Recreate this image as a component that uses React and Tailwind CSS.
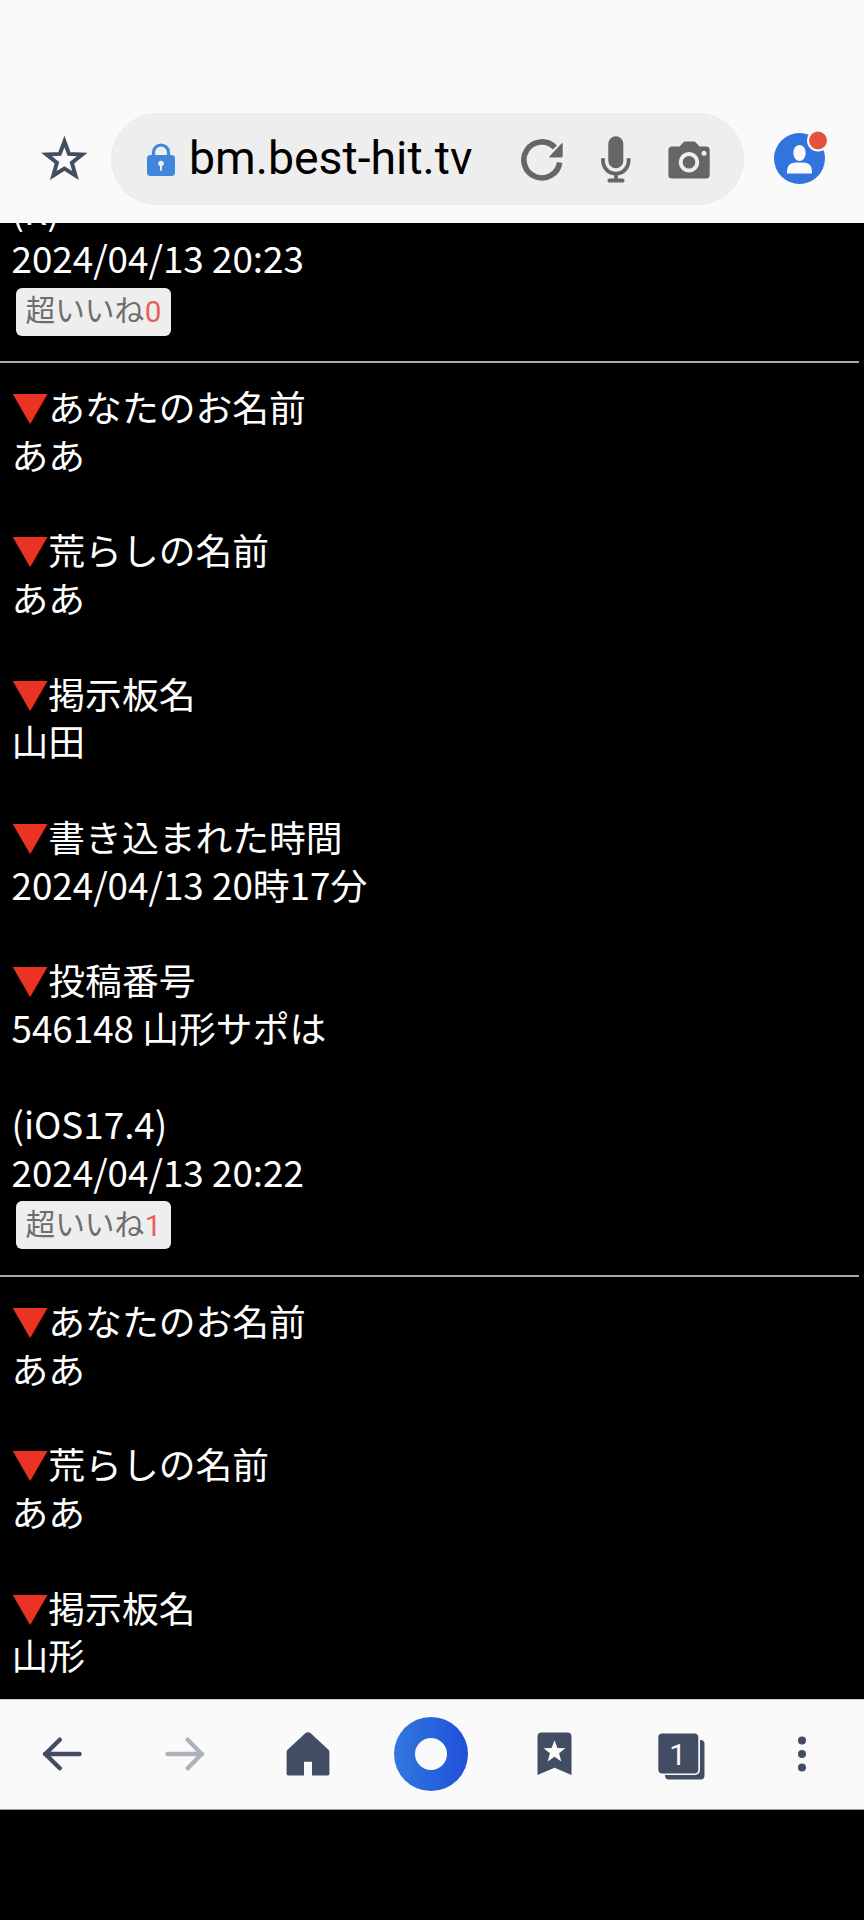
import React from 'react';

const posts = [
  {
    fields: [],
    agent: '(R)',
    date: '2024/04/13 20:23',
    likes: 0,
  },
  {
    fields: [
      { label: 'あなたのお名前', value: 'ああ' },
      { label: '荒らしの名前', value: 'ああ' },
      { label: '掲示板名', value: '山田' },
      { label: '書き込まれた時間', value: '2024/04/13 20時17分' },
      { label: '投稿番号', value: '546148 山形サポは' },
    ],
    agent: '(iOS17.4)',
    date: '2024/04/13 20:22',
    likes: 1,
  },
  {
    fields: [
      { label: 'あなたのお名前', value: 'ああ' },
      { label: '荒らしの名前', value: 'ああ' },
      { label: '掲示板名', value: '山形' },
    ],
  },
];

const Post = ({ post }) => (
  <article>
    <div className="pl-[11.5px]">
      {post.fields.map((field) => (
        <div key={field.label} className="mb-[47.8px]">
          <p>
            <span className="text-[#ea3323]">▼</span>
            {field.label}
          </p>
          <p>{field.value}</p>
        </div>
      ))}
      {post.date && (
        <>
          <p>{post.agent}</p>
          <p>{post.date}</p>
          <button className="mt-[6px] ml-[4.5px] flex h-12 w-[155px] items-center rounded-md bg-[#eee] pl-[9.5px] text-[29.7px] leading-none text-[#6e6e6e]">
            <span className="-mt-[5px]">超いいね</span>
            <span className="ml-[0.5px] font-[Roboto] text-[#e8605c]">{post.likes}</span>
          </button>
        </>
      )}
    </div>
    {post.date && <hr className="mt-[25.3px] mr-[5px] mb-[20px] h-[2px] border-0 bg-[#aaa]" />}
  </article>
);

const AddressBar = () => (
  <header className="flex h-[223px] shrink-0 items-start bg-[#fafafa] pt-[113px]">
    {/* Favori */}
    <svg width="46" height="46" viewBox="0 0 46 46" className="mt-[22px] ml-[41px] shrink-0">
      <path
        d="M23.4 6.5l4.6 12.4 13.2.6-10.3 8.2 3.6 12.8-11.100-7-11.100 7 3.600-12.800-10.300-8.200 13.200-.6z"
        fill="none"
        stroke="#424d63"
        strokeWidth="4"
      />
    </svg>
    <div className="ml-6 flex h-[92px] w-[633px] shrink-0 items-center rounded-full border border-[#ebebeb] bg-[#eee]">
      <svg width="28" height="33" viewBox="0 0 28 33" className="ml-[35px] shrink-0">
        <path d="M6.5 14V9.5a7.5 7.5 0 0 1 15 0V14" fill="none" stroke="#4285dd" strokeWidth="3.2" />
        <rect y="12" width="28" height="21" rx="3.5" fill="#4285dd" />
        <circle cx="14" cy="20.5" r="2.8" fill="#eee" />
        <path d="M14 21v6" stroke="#eee" strokeWidth="2" strokeLinecap="round" />
      </svg>
      <span className="-mt-[2px] ml-[14px] w-[332px] font-[Roboto] text-[46.4px] leading-none whitespace-nowrap text-black">
        bm.best-hit.tv
      </span>
      <svg width="42" height="42" viewBox="0 0 42 42" className="mt-px shrink-0">
        <path d="M38.700 23.500A18 18 0 1 1 33.900 8.500" fill="none" stroke="#666" strokeWidth="5.6" />
        <path d="M40.500 4.500q1.200-1.100 1.200.6v11.700q0 1.700-1.700 1.700H29.500q-2 0-.6-1.500z" fill="#666" />
      </svg>
      <svg width="30" height="47" viewBox="0 0 30 47" className="mt-px ml-[38px] shrink-0">
        <rect x="7.3" y="0.3" width="15" height="32" rx="7.5" fill="#666" />
        <path d="M2 22.3v2.5a12.8 12.8 0 0 0 25.6 0v-2.5M15 37v7" fill="none" stroke="#666" strokeWidth="3.8" />
        <rect x="6.5" y="42.6" width="17" height="4" rx="1.8" fill="#666" />
      </svg>
      <svg width="42" height="38" viewBox="0 0 42 38" className="mt-px ml-[37px] shrink-0">
        <path
          d="M4 5.5h7.5L15.5 1.2Q16 .6 17 .6h9q1 0 1.6.6l3.9 4.3H38q3.7 0 3.7 3.7V34q0 3.6-3.7 3.6H4Q.4 37.6.4 34V9.2Q.4 5.5 4 5.5z"
          fill="#666"
        />
        <circle cx="21" cy="21.3" r="8.3" fill="#666" stroke="#eee" strokeWidth="4" />
        <circle cx="36" cy="12.3" r="2.5" fill="#eee" />
      </svg>
    </div>
    <svg width="56" height="56" viewBox="0 0 56 56" className="mt-[16px] ml-[29px] shrink-0">
      <circle cx="26.5" cy="29.5" r="25.5" fill="#3174dd" />
      <ellipse cx="26.5" cy="24" rx="6.2" ry="8" fill="#fafafa" />
      <path d="M14 44.5V42q0-8.5 9-8.5h7q9 0 9 8.5v2.5z" fill="#fafafa" />
      <circle cx="45" cy="11.5" r="10" fill="#e2533f" stroke="#fafafa" strokeWidth="2" />
    </svg>
  </header>
);

const NavBar = () => (
  <nav className="grid h-[111px] shrink-0 grid-cols-7 items-center justify-items-center border-t border-b border-t-[#ccc] border-b-[#999] bg-[#fafafa] pr-[2px] pb-px">
    <svg width="40" height="34" viewBox="0 0 40 34">
      <path
        d="M37.5 17H3M17.8 2.7L3.3 17l14.5 14.3"
        fill="none"
        stroke="#424d63"
        strokeWidth="4.4"
        strokeLinecap="round"
        strokeLinejoin="round"
      />
    </svg>
    <svg width="40" height="34" viewBox="0 0 40 34">
      <path
        d="M2.5 17H37M22.7 2.7L36.7 17l-14 14.3"
        fill="none"
        stroke="#adb2bc"
        strokeWidth="4.4"
        strokeLinecap="round"
        strokeLinejoin="round"
      />
    </svg>
    <svg width="44" height="44" viewBox="0 0 44 44">
      <path
        d="M.6 20q0-1.2 1-2.2L19 1.6q3-2.6 6 0l17.4 16.2q1 1 1 2.2v21.8q0 1.6-1.6 1.6H26V29.8h-8v13.6H2.2Q.6 43.4.6 41.8z"
        fill="#424d63"
      />
    </svg>
    <div className="flex h-[74px] w-[74px] items-center justify-center rounded-full bg-linear-to-r from-[#3277dd] to-[#224fda]">
      <div className="h-8 w-8 rounded-full bg-[#fafafa]" />
    </div>
    <svg width="35" height="44" viewBox="0 0 35 44">
      <path d="M.5 43V4.5Q.5.6 4.5.6h26q4 0 4 3.9V43l-17-7.2z" fill="#424d63" />
      <path d="M17.5 8.2l2.9 7.8 8 .3-6.3 5 2.2 8.1-6.8-4.6-6.8 4.6 2.2-8.1-6.3-5 8-.3z" fill="#fafafa" />
    </svg>
    <div className="mt-[5px] ml-[8px] grid">
      <svg width="47" height="47" viewBox="0 0 47 47" className="col-start-1 row-start-1">
        <rect x="7" y="7" width="39.5" height="39.5" rx="4" fill="#424d63" />
        <rect x="-2" y="-2" width="44" height="44" rx="5" fill="#fafafa" />
        <rect x="0.3" y="0.5" width="40" height="40" rx="4" fill="#424d63" />
      </svg>
      <span className="col-start-1 row-start-1 w-10 pt-[6px] text-center font-[Roboto] text-[30px] leading-8 text-[#fafafa]">
        1
      </span>
    </div>
    <svg width="8" height="36" viewBox="0 0 8 36" className="ml-[4px]">
      <circle cx="4" cy="4.500" r="4" fill="#424d63" />
      <circle cx="4" cy="18" r="4" fill="#424d63" />
      <circle cx="4" cy="31.5" r="4" fill="#424d63" />
    </svg>
  </nav>
);

const App = () => {
  return (
    <div className="flex h-[1920px] w-[864px] flex-col overflow-hidden bg-black">
      <AddressBar />

      {/* Fil des messages */}
      <main className="h-[1476px] shrink-0 overflow-hidden font-['Noto_Sans_CJK_JP',sans-serif] text-[36.8px] leading-[47.8px] text-white">
        <div className="-mt-[37px]">
          {posts.map((post, i) => (
            <Post key={i} post={post} />
          ))}
        </div>
      </main>

      <NavBar />
    </div>
  );
};

export default App;
